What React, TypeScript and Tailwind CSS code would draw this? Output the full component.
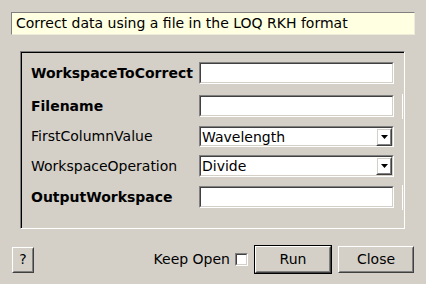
import type { ReactNode } from "react";

const Sunken = ({ children, className = "" }: { children?: ReactNode; className?: string }) => (
  <div
    className={`shrink-0 border border-t-[#808080] border-l-[#808080] border-b-white border-r-white ${className}`}
  >
    <div className="flex h-full w-full items-center border border-t-[#404040] border-l-[#404040] border-b-[#d4d0c8] border-r-[#d4d0c8] bg-white">
      {children}
    </div>
  </div>
);

const Raised = ({ children, className = "" }: { children?: ReactNode; className?: string }) => (
  <div
    className={`shrink-0 border border-t-white border-l-white border-b-[#404040] border-r-[#404040] ${className}`}
  >
    <div className="flex h-full w-full items-center justify-center border border-t-[#d4d0c8] border-l-[#d4d0c8] border-b-[#808080] border-r-[#808080]">
      {children}
    </div>
  </div>
);

const Combo = ({ value }: { value: string }) => (
  <Sunken className="h-full w-[195px]">
    <span className="flex-1 pl-[1px] text-[14px] leading-none">{value}</span>
    <Raised className="h-[18px] w-[16px]">
      <svg width="7" height="4" viewBox="0 0 7 4">
        <path d="M0 0h7L3.5 4z" fill="#000" />
      </svg>
    </Raised>
  </Sunken>
);

const Browse = () => (
  <div className="ml-[8px] flex h-[25px] w-[3px] shrink-0 flex-col justify-end border-l border-white">
    <div className="ml-[1px] h-[1px] w-[1px] bg-black" />
  </div>
);

const Row = ({
  label,
  bold,
  className,
  children,
}: {
  label: string;
  bold?: boolean;
  className: string;
  children: ReactNode;
}) => (
  <div className={`flex items-center ${className}`}>
    <span className={`w-[168px] shrink-0 text-[14px] ${bold ? "font-bold" : ""}`}>{label}</span>
    {children}
  </div>
);

export default function App() {
  return (
    <div
      className="flex h-[284px] w-[426px] flex-col overflow-hidden bg-[#d4d0c8] text-black"
      style={{ fontFamily: '"DejaVu Sans", sans-serif' }}
    >
      <div className="ml-[11px] mt-[12px] flex h-[23px] w-[404px] items-center border border-t-[#808080] border-l-[#808080] border-b-[#ecead8] border-r-[#ecead8] bg-[#ffffe1] pl-[4px] text-[14px]">
        Correct data using a file in the LOQ RKH format
      </div>

      <div className="ml-[20px] mt-[16px] h-[178px] w-[385px] overflow-hidden border border-t-[#808080] border-l-[#808080] border-b-white border-r-white">
        <div className="h-full w-full border-t border-l border-black pl-[9px]">
          <Row label="WorkspaceToCorrect" bold className="mt-[9px] h-[22px]">
            <Sunken className="h-full w-[195px]" />
          </Row>
          <Row label="Filename" bold className="mt-[11px] h-[22px]">
            <Sunken className="h-full w-[195px]" />
            <Browse />
          </Row>
          <Row label="FirstColumnValue" className="mt-[9px] h-[21px]">
            <Combo value="Wavelength" />
          </Row>
          <Row label="WorkspaceOperation" className="mt-[8px] h-[22px]">
            <Combo value="Divide" />
          </Row>
          <Row label="OutputWorkspace" bold className="mt-[9px] h-[22px]">
            <Sunken className="h-full w-[195px]" />
            <Browse />
          </Row>
        </div>
      </div>

      <div className="ml-[12px] mr-[12px] mt-[16px] flex h-[29px] items-center">
        <Raised className="h-[26px] w-[22px] text-[14px]">?</Raised>
        <div className="flex-1" />
        <span className="text-[14px]">Keep Open</span>
        <Sunken className="ml-[5px] h-[13px] w-[13px]" />
        <div className="ml-[6px] h-[29px] w-[78px] shrink-0 border border-black">
          <Raised className="h-full w-full text-[14px]">Run</Raised>
        </div>
        <Raised className="ml-[6px] h-[27px] w-[76px] text-[14px]">Close</Raised>
      </div>
    </div>
  );
}
